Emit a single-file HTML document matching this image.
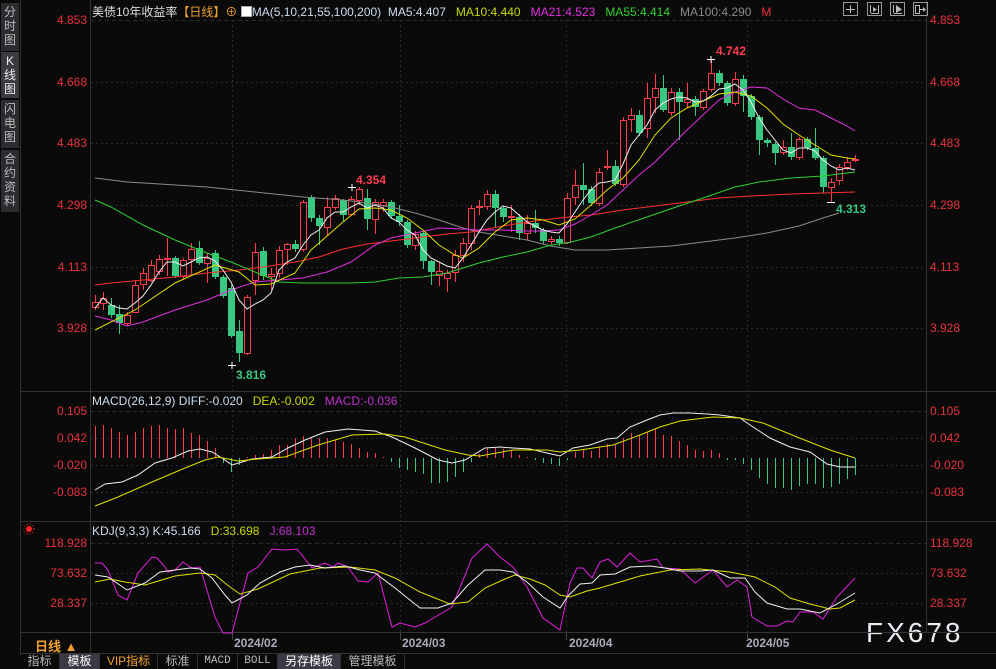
<!DOCTYPE html>
<html><head><meta charset="utf-8"><style>
*{margin:0;padding:0;box-sizing:border-box}
body{width:996px;height:669px;background:#0a0a0a;overflow:hidden;position:relative;font-family:"Liberation Sans","Noto Sans CJK SC",sans-serif}
.side{position:absolute;left:1px;width:18px;background:#2b2b30;color:#bbb;font-size:12px;line-height:14px;text-align:center;padding-top:2px}
.ax{position:absolute;font-size:12px;color:#e8333d}
.l{right:909px;text-align:right}
.r{left:930px}
.tab{position:absolute;top:653px;height:16px;font-size:12px;line-height:16px;text-align:center;color:#bbb;border-right:1px solid #333}
svg{position:absolute;left:0;top:0}
</style></head><body>
<div class="side" style="top:3px;height:48px">分<br>时<br>图</div>
<div class="side" style="top:52px;height:46px;background:#3a3a40;color:#eee">K<br>线<br>图</div>
<div class="side" style="top:100px;height:48px">闪<br>电<br>图</div>
<div class="side" style="top:150px;height:62px">合<br>约<br>资<br>料</div>

<div style="position:absolute;left:92px;top:3px;font-size:12px;white-space:nowrap;color:#ddd">美债10年收益率<span style="color:#f0a030">【日线】</span><span style="color:#f0a030">⊕</span> <span style="display:inline-block;width:11px;height:11px;border:1px solid #aaa;background:#fff;vertical-align:-1px"></span><span style="color:#cde">MA(5,10,21,55,100,200)&nbsp; MA5:4.407&nbsp;&nbsp; </span><span style="color:#c8d800">MA10:4.440&nbsp;&nbsp; </span><span style="color:#e030e0">MA21:4.523&nbsp;&nbsp; </span><span style="color:#30d030">MA55:4.414&nbsp;&nbsp; </span><span style="color:#888">MA100:4.290&nbsp;&nbsp; </span><span style="color:#e8333d">M</span></div>
<div style="position:absolute;left:92px;top:394px;font-size:12px;white-space:nowrap;color:#cde">MACD(26,12,9) DIFF:-0.020&nbsp;&nbsp; <span style="color:#c8d800">DEA:-0.002&nbsp;&nbsp; </span><span style="color:#c030d0">MACD:-0.036</span></div>
<div style="position:absolute;left:92px;top:524px;font-size:12px;white-space:nowrap;color:#cde">KDJ(9,3,3) K:45.166&nbsp;&nbsp; <span style="color:#c8d800">D:33.698&nbsp;&nbsp; </span><span style="color:#c030d0">J:68.103</span></div>

<div class="ax l" style="top:13px">4.853</div><div class="ax l" style="top:75px">4.668</div><div class="ax l" style="top:136px">4.483</div><div class="ax l" style="top:198px">4.298</div><div class="ax l" style="top:260px">4.113</div><div class="ax l" style="top:321px">3.928</div>
<div class="ax r" style="top:13px">4.853</div><div class="ax r" style="top:75px">4.668</div><div class="ax r" style="top:136px">4.483</div><div class="ax r" style="top:198px">4.298</div><div class="ax r" style="top:260px">4.113</div><div class="ax r" style="top:321px">3.928</div>
<div class="ax l" style="top:404px">0.105</div><div class="ax l" style="top:431px">0.042</div><div class="ax l" style="top:458px">-0.020</div><div class="ax l" style="top:485px">-0.083</div>
<div class="ax r" style="top:404px">0.105</div><div class="ax r" style="top:431px">0.042</div><div class="ax r" style="top:458px">-0.020</div><div class="ax r" style="top:485px">-0.083</div>
<div class="ax l" style="top:536px">118.928</div><div class="ax l" style="top:566px">73.632</div><div class="ax l" style="top:596px">28.337</div>
<div class="ax r" style="top:536px">118.928</div><div class="ax r" style="top:566px">73.632</div><div class="ax r" style="top:596px">28.337</div>

<div style="position:absolute;left:35px;top:636px;font-size:13px;color:#f0a030;font-weight:bold">日线 ▲</div>
<div style="position:absolute;top:636px;left:234px;font-size:12px;color:#aab;font-weight:bold">2024/02</div>
<div style="position:absolute;top:636px;left:402px;font-size:12px;color:#aab;font-weight:bold">2024/03</div>
<div style="position:absolute;top:636px;left:569px;font-size:12px;color:#aab;font-weight:bold">2024/04</div>
<div style="position:absolute;top:636px;left:746px;font-size:12px;color:#aab;font-weight:bold">2024/05</div>
<div style="position:absolute;left:866px;top:617px;font-size:28px;color:#e8eef4;letter-spacing:3px">FX678</div>

<div class="tab" style="left:20px;width:40px">指标</div>
<div class="tab" style="left:60px;width:40px;background:#3a3a44;color:#fff">模板</div>
<div class="tab" style="left:100px;width:58px;color:#f0a030">VIP指标</div>
<div class="tab" style="left:158px;width:40px">标准</div>
<div class="tab" style="left:198px;width:40px;font-family:'Liberation Mono';font-size:11px">MACD</div>
<div class="tab" style="left:238px;width:40px;font-family:'Liberation Mono';font-size:11px">BOLL</div>
<div class="tab" style="left:278px;width:63px;background:#3a3a44;color:#fff">另存模板</div>
<div class="tab" style="left:341px;width:64px">管理模板</div>

<svg id="s" width="996" height="669"></svg>
<script>
var s='';
function L(x1,y1,x2,y2,c,d,w){s+='<line x1="'+x1+'" y1="'+y1+'" x2="'+x2+'" y2="'+y2+'" stroke="'+c+'" stroke-width="'+(w||1)+'"'+(d?' stroke-dasharray="'+d+'"':'')+'/>';}
L(20.5,0,20.5,653,'#333');L(90.5,0,90.5,653,'#333');L(926.5,0,926.5,632,'#333');
L(20,391.5,996,391.5,'#333');L(20,521.5,996,521.5,'#333');L(20,632.5,996,632.5,'#333');L(20,653.5,996,653.5,'#333');
[20,82,143,205,267,328].forEach(function(y,i){L(91,y+.5,926,y+.5,'#2a2a2a',i==0?'4,3':'2,3')});
[411,438,465,492].forEach(function(y,i){L(91,y+.5,926,y+.5,'#2a2a2a',i==0?'4,3':'2,3')});
[543,573,603].forEach(function(y,i){L(91,y+.5,926,y+.5,'#2a2a2a',i==0?'4,3':'2,3')});
[232,400,566,747].forEach(function(x){L(x+.5,20,x+.5,632,'#2a2a2a','2,3');L(x+.5,633,x+.5,640,'#444')});
[852,876,899,922].forEach(function(x,i){s+='<rect x="'+(x-8.5)+'" y="2.5" width="14" height="13" fill="none" stroke="#999"/>';
var c=x-1.5;
if(i==0){L(c,5,c,13,'#bbb');L(x-6,9.5,x+3,9.5,'#bbb');}
else if(i==1){L(x-5.5,5,x-5.5,13,'#bbb');L(x+2.5,5,x+2.5,13,'#bbb');L(x-5,13.5,x+3,13.5,'#bbb');s+='<path d="M'+(x-3)+' 7 L'+(x+1)+' 9.5 L'+(x-3)+' 12Z" fill="#bbb"/>';}
else if(i==2){L(x-5.5,5,x-5.5,13,'#bbb');L(x-5,13.5,x+3,13.5,'#bbb');s+='<path d="M'+(x-3)+' 5 L'+(x+3)+' 9.5 L'+(x-3)+' 13Z" fill="#bbb"/>';}
else {s+='<rect x="'+(x-6.5)+'" y="5.5" width="4" height="8" fill="none" stroke="#bbb"/>';L(x-2,9.5,x+3,9.5,'#bbb');s+='<path d="M'+(x+1)+' 7 L'+(x+4)+' 9.5 L'+(x+1)+' 12Z" fill="#bbb"/>';}
});
var C=[[302,307,295,310,1],[298,303,292,310,1],[305,315,298,318,0],[314,323,305,334,0],[315,323,312,326,1],[285,312,280,312,1],[273,284,268,290,1],[265,280,260,282,1],[259,271,255,275,1],[258,259,238,276,1],[258,276,256,278,0],[260,276,258,280,1],[249,259,243,275,1],[248,263,241,265,0],[258,263,253,283,1],[253,277,250,279,0],[277,296,275,298,0],[288,336,285,338,0],[331,353,320,362,0],[297,353,295,355,1],[252,280,243,295,1],[251,276,247,280,0],[274,276,268,290,1],[250,273,246,278,1],[244,249,243,265,1],[244,249,240,252,0],[202,249,200,252,1],[197,218,195,222,0],[218,226,215,245,0],[207,227,197,235,1],[198,207,195,210,1],[200,215,199,221,0],[199,214,196,216,1],[189,200,187,205,1],[198,219,189,230,0],[202,219,199,234,1],[202,205,199,212,1],[202,216,200,218,0],[216,222,205,226,0],[222,245,220,248,0],[234,245,231,250,1],[233,261,231,269,0],[261,272,260,285,0],[271,275,263,286,1],[273,278,270,292,1],[255,272,250,282,1],[243,255,238,262,1],[208,243,205,250,1],[206,207,200,215,1],[194,206,190,210,1],[194,208,190,227,0],[208,217,206,222,0],[216,217,205,232,1],[217,233,214,240,0],[223,233,215,240,1],[223,228,210,233,0],[230,241,228,244,0],[239,241,236,244,1],[239,243,236,246,0],[198,242,193,244,1],[185,197,170,205,1],[185,190,163,205,0],[189,203,186,206,0],[172,203,168,206,1],[166,167,150,170,1],[166,184,160,186,0],[120,184,117,187,1],[115,119,108,132,1],[115,133,110,136,0],[98,128,83,138,1],[88,97,74,113,1],[88,110,75,112,0],[92,112,88,116,1],[92,102,88,140,0],[99,102,83,108,1],[99,107,96,116,0],[91,107,89,110,1],[73,89,59,92,1],[73,83,70,86,0],[83,103,81,106,0],[79,103,72,106,1],[79,96,75,112,0],[96,117,94,120,0],[117,140,115,155,0],[140,143,138,147,0],[144,153,142,165,0],[147,152,140,155,1],[147,157,133,160,0],[139,157,137,160,1],[139,148,137,150,0],[148,158,128,160,0],[158,187,156,193,0],[182,187,178,202,1],[167,180,164,185,1],[162,167,157,170,1],[159,160,155,162,1]];
C.forEach(function(c,i){var x=95+8*i,col=c[4]?'#ff3b4e':'#39c881';
L(x+.5,c[2],x+.5,c[3],col);
var h=Math.max(c[1]-c[0],1);
if(c[4])s+='<rect x="'+(x-2.5)+'" y="'+(c[0]+.5)+'" width="6" height="'+h+'" fill="#0a0a0a" stroke="'+col+'"/>';
else s+='<rect x="'+(x-3)+'" y="'+c[0]+'" width="7" height="'+h+'" fill="'+col+'"/>';});
function P(pts,c){s+='<polyline fill="none" stroke="'+c+'" stroke-width="1" points="'+pts+'"/>';}
P('95,178 127,182 160,184 207,187 255,192 303,197 343,200 367,203 391,207 415,213 439,220 463,228 479,232 503,236 527,240 551,246 575,250 607,250 639,248 671,246 703,242 735,238 767,233 799,226 823,218 839,213','#8a8a8a');
P('95,285 111,283 143,280 175,277 207,273 239,270 263,267 295,262 319,257 343,249 367,244 383,242 415,238 447,234 471,232 503,226 527,222 559,218 591,215 623,210 655,206 687,202 719,198 751,196 791,194 823,193 855,192','#ff3030');
P('95,200 111,207 143,225 175,240 207,253 231,262 255,272 279,282 303,283 327,283 351,283 375,282 399,278 423,277 447,273 463,268 479,263 503,257 527,252 551,245 567,243 591,237 615,228 647,217 679,206 703,198 735,187 759,182 791,178 823,176 855,172','#30d030');
P('95,316 111,320 127,326 143,322 175,310 207,300 231,290 255,282 279,280 303,278 327,272 351,262 375,245 391,238 415,233 439,228 463,229 479,230 503,230 527,231 543,231 559,230 575,224 591,215 607,205 623,190 639,175 655,162 671,146 687,130 703,115 719,100 735,92 751,87 767,88 783,99 799,108 815,110 831,118 847,126 855,131','#e030e0');
P('95,330 135,310 175,283 215,265 239,272 255,285 271,284 295,273 311,250 327,236 343,222 359,209 375,208 391,210 407,218 423,230 439,245 455,255 463,258 479,248 495,232 511,220 527,218 543,220 559,225 575,219 591,205 607,190 623,178 639,160 655,135 671,118 687,108 703,101 719,94 735,92 751,96 767,108 783,124 799,135 815,145 831,155 847,158 855,159','#e0e000');
P('95,308 103,298 111,305 119,308 127,309 135,303 143,296 151,285 159,272 167,262 175,262 183,266 191,262 199,258 207,257 215,261 223,270 231,282 239,300 247,309 255,304 263,300 271,293 279,270 287,262 295,258 303,245 311,235 319,230 327,218 335,212 343,212 351,207 359,203 367,208 375,205 383,208 391,218 399,222 407,230 415,235 423,250 431,258 439,262 447,266 455,268 463,258 471,245 479,232 487,220 495,212 503,206 511,208 519,215 527,222 535,226 543,230 551,232 559,233 567,224 575,212 583,200 591,190 599,183 607,182 615,180 623,164 631,145 639,135 647,125 655,110 663,103 671,99 679,97 687,98 695,102 703,101 711,96 719,89 727,88 735,84 743,90 751,102 759,118 767,130 775,140 783,150 791,153 799,148 807,148 815,151 823,160 831,166 839,170 847,168 855,170','#f0f0f0');
function T(x,y,t,c){s+='<text x="'+x+'" y="'+y+'" fill="'+c+'" font-size="12" font-weight="bold" font-family="Liberation Sans">'+t+'</text>';}
L(707,59.5,715,59.5,'#fff');L(711,56,711,63,'#fff');T(716,55,'4.742','#ff3b4e');
L(348,187.5,356,187.5,'#fff');L(352,184,352,191,'#fff');T(356,184,'4.354','#ff3b4e');
L(228,365.5,236,365.5,'#fff');L(232,362,232,369,'#fff');T(236,379,'3.816','#39c881');
L(827,202.5,835,202.5,'#fff');T(836,213,'4.313','#39c881');
var M=[426,425,428,432,435,432,428,426,425,428,429,428,433,435,441,448,463,472,465,457,455,454,450,445,445,438,436,438,438,438,440,442,444,448,452,453,457,462,468,470,472,474,483,483,482,477,472,462,454,448,448,449,451,455,457,460,463,464,466,460,452,449,451,447,444,445,438,433,435,432,429,435,436,441,445,450,451,450,453,460,460,464,470,478,484,488,488,490,486,484,484,488,487,484,479,475];
M.forEach(function(y,i){var x=95+8*i+.5;L(x,458,x,y,y<458?'#ff3b4e':'#39c881');});
P('95,490 105,484 122,482 138,475 155,463 172,458 188,451 200,449 212,452 222,458 232,465 242,462 252,459 272,457 288,448 305,440 325,432 348,429 375,431 392,437 415,448 438,460 452,463 465,460 485,448 500,447 513,448 530,449 547,453 560,456 573,448 590,445 607,439 617,438 630,427 647,420 660,415 673,413 690,413 707,414 720,415 740,418 750,425 770,438 790,447 810,452 827,464 840,467 855,467','#f0f0f0');
P('95,506 118,497 152,482 185,468 205,460 218,457 238,461 258,459 285,457 318,445 352,435 385,434 405,437 445,450 468,455 480,456 513,450 547,450 560,452 580,450 613,445 640,435 660,427 680,421 713,417 740,418 763,423 797,437 830,450 855,458','#e0e000');
P('95,563 102,563 108,570 118,595 127,600 138,573 152,557 157,558 165,567 168,572 175,570 183,562 192,568 200,567 215,617 223,633 232,633 248,573 258,567 272,549 285,550 297,549 312,568 325,563 333,567 338,563 348,567 358,581 368,582 378,573 392,627 400,623 415,627 425,623 442,613 452,607 472,558 487,544 500,557 513,567 527,587 543,618 560,630 570,583 577,568 583,568 592,578 600,562 608,559 617,567 630,553 640,562 657,559 663,568 680,569 695,583 713,570 727,587 737,580 747,587 752,617 767,626 777,626 787,621 793,622 800,612 813,612 823,619 837,597 855,578','#e020e0');
P('95,582 110,579 125,582 145,585 175,576 200,573 215,575 230,587 240,594 258,589 290,574 320,568 350,567 375,570 395,578 420,592 450,604 468,602 485,588 505,579 515,575 530,579 545,585 560,595 570,597 587,591 600,588 620,582 640,576 670,570 700,569 730,572 755,577 775,587 790,598 810,604 830,609 840,608 855,600','#e0e000');
P('95,575 108,577 127,590 145,583 160,572 175,570 190,568 200,569 212,578 225,595 232,603 247,595 260,583 280,572 295,567 310,565 325,568 345,566 360,570 375,573 395,588 420,608 438,608 452,603 468,585 485,570 500,570 513,572 527,582 543,597 560,608 568,596 580,584 592,583 600,575 615,574 630,567 650,566 665,568 680,571 700,571 713,570 730,578 745,578 755,592 767,603 787,609 800,609 820,613 837,604 855,593','#f0f0f0');
s+='<circle cx="29" cy="529" r="3" fill="#f22"/><circle cx="29" cy="529" r="5" fill="none" stroke="#f22" stroke-dasharray="1,2"/>';
document.getElementById('s').innerHTML=s;
</script>
</body></html>
